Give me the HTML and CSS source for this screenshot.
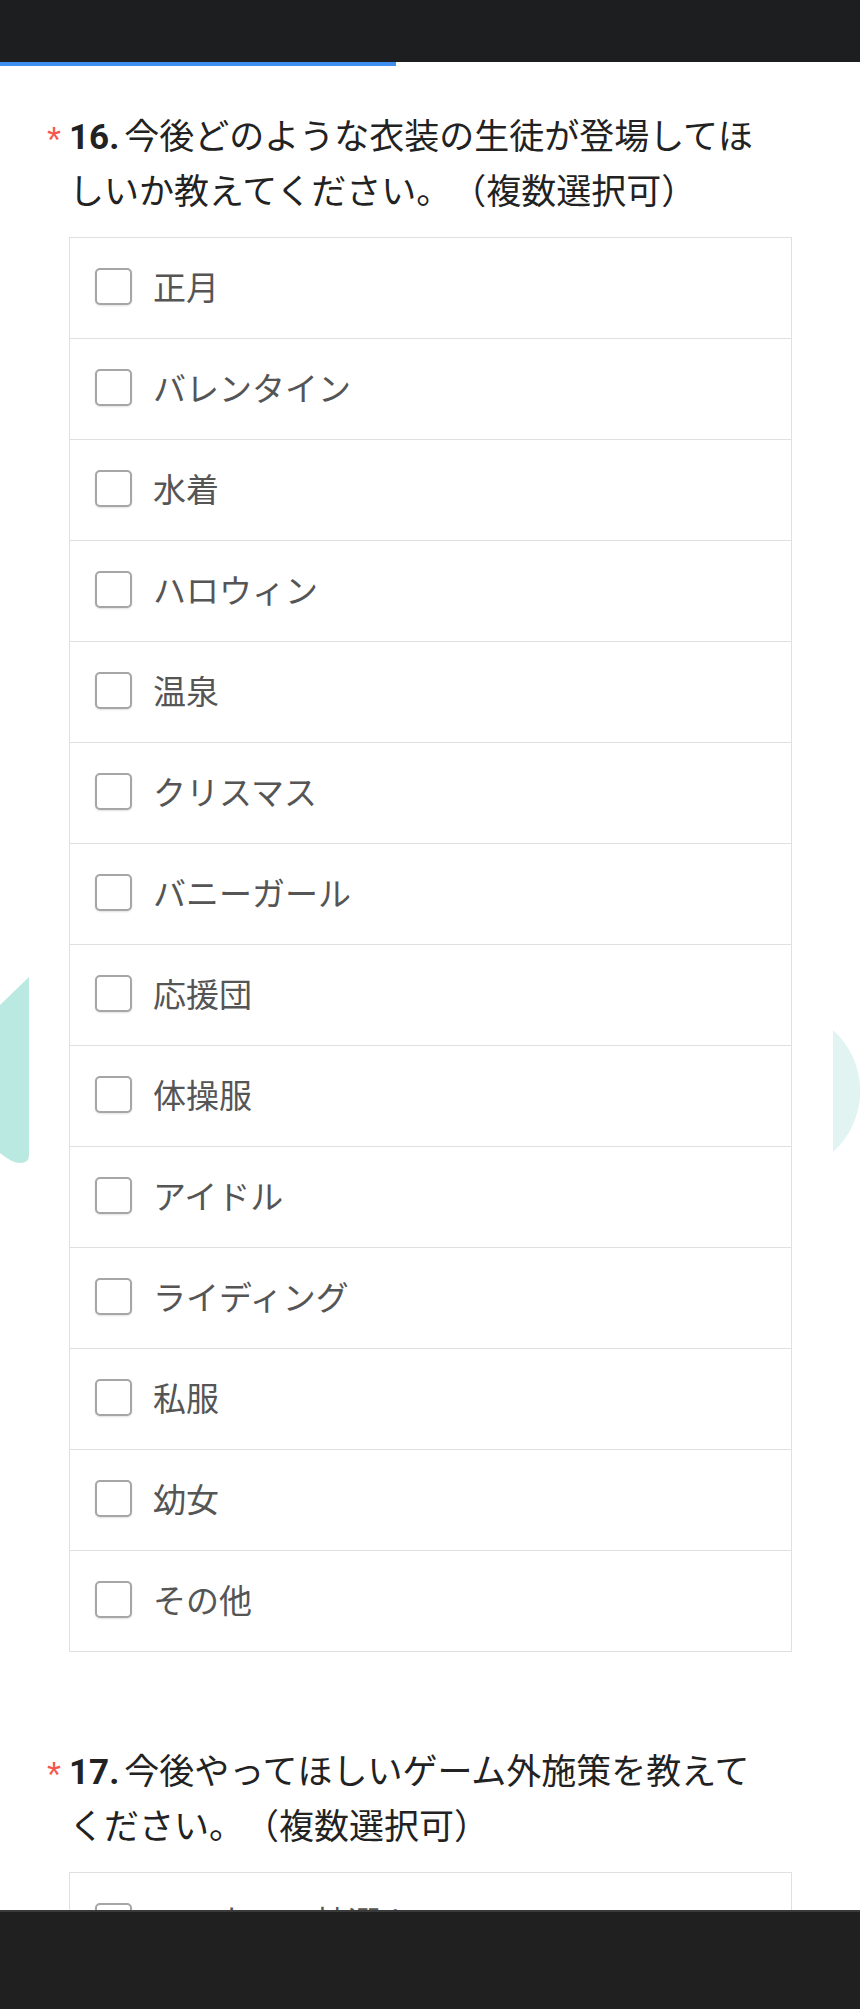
FILE: index.html
```html
<!DOCTYPE html>
<html lang="ja">
<head>
<meta charset="utf-8">
<title>アンケート</title>
<link rel="stylesheet" href="styles.css">
</head>
<body>
<div class="page">
  <header class="topbar"></header>
  <div class="progress"><div class="progress-fill" style="width:396px"></div></div>

  <svg class="deco deco-left" width="29" height="187" viewBox="0 0 29 187"><path d="M0 28 L29 0 L29 178 Q29 186 20 186 Q12 186 0 176 Z" fill="#b9e9e1"/></svg>
  <svg class="deco deco-right" width="27" height="122" viewBox="0 0 27 122"><path d="M0 0 A82 82 0 0 1 0 122 Z" fill="#e1f4f1"/></svg>

  <main class="form">
    <section class="question">
      <h2 class="q-title"><span class="req">*</span><span class="q-no">16.</span> 今後どのような衣装の生徒が登場してほしいか教えてください。（複数選択可）</h2>
      <ul class="options">
        <li class="option"><span class="check"></span><span class="label">正月</span></li>
        <li class="option"><span class="check"></span><span class="label">バレンタイン</span></li>
        <li class="option"><span class="check"></span><span class="label">水着</span></li>
        <li class="option"><span class="check"></span><span class="label">ハロウィン</span></li>
        <li class="option"><span class="check"></span><span class="label">温泉</span></li>
        <li class="option"><span class="check"></span><span class="label">クリスマス</span></li>
        <li class="option"><span class="check"></span><span class="label">バニーガール</span></li>
        <li class="option"><span class="check"></span><span class="label">応援団</span></li>
        <li class="option"><span class="check"></span><span class="label">体操服</span></li>
        <li class="option"><span class="check"></span><span class="label">アイドル</span></li>
        <li class="option"><span class="check"></span><span class="label">ライディング</span></li>
        <li class="option"><span class="check"></span><span class="label">私服</span></li>
        <li class="option"><span class="check"></span><span class="label">幼女</span></li>
        <li class="option"><span class="check"></span><span class="label">その他</span></li>
      </ul>
    </section>

    <section class="question">
      <h2 class="q-title"><span class="req">*</span><span class="q-no">17.</span> 今後やってほしいゲーム外施策を教えてください。（複数選択可）</h2>
      <ul class="options">
        <li class="option"><span class="check"></span><span class="label">SNS上での抽選キャンペーン</span></li>
        <li class="option"><span class="check"></span><span class="label">コラボカフェ</span></li>
        <li class="option"><span class="check"></span><span class="label">グッズ販売</span></li>
      </ul>
    </section>
  </main>

  <footer class="bottombar"></footer>
</div>
</body>
</html>
```

FILE: styles.css
```css
html, body {
  margin: 0;
  padding: 0;
  background: #ffffff;
}

body {
  font-family: "Noto Sans CJK JP", "Noto Sans", sans-serif;
  color: #222222;
  text-spacing-trim: space-all;
}

.page {
  position: relative;
  min-height: 2400px;
}

.topbar {
  height: 62px;
  background: #1d1e20;
}

.progress {
  height: 4px;
  background: #ffffff;
}

.progress-fill {
  height: 100%;
  background: #3f8ff0;
}

.deco {
  position: absolute;
  display: block;
}

.deco-left {
  left: 0;
  top: 977px;
}

.deco-right {
  right: 0;
  top: 1030px;
}

.form {
  padding: 0 68px 0 69px;
}

.question {
  padding: 42px 0 49px;
}

.q-title {
  margin: 0 0 23px;
  padding: 0 20px 0 0;
  font-size: 35px;
  font-weight: 400;
  line-height: 51px;
  color: #222222;
  position: relative;
  text-spacing-trim: space-all;
}

.req {
  position: absolute;
  left: -22px;
  top: 7px;
  line-height: 52px;
  color: #f5574c;
  font-size: 36px;
  font-family: "Liberation Sans", sans-serif;
}

.q-no {
  font-family: Roboto, "Noto Sans CJK JP", sans-serif;
  font-weight: 700;
  margin-right: -3px;
}

.options {
  list-style: none;
  margin: 0;
  padding: 0;
  border: 1px solid #e0e0e0;
}

.option {
  display: flex;
  align-items: center;
  box-sizing: border-box;
  height: 101px;
  padding: 0 0 4px 25px;
  border-bottom: 1px solid #e0e0e0;
}

.option:last-child {
  height: 100px;
  border-bottom: none;
}

.check {
  flex: none;
  box-sizing: border-box;
  width: 37px;
  height: 37px;
  border: 2px solid #a6a6a6;
  border-radius: 5px;
  background: #fff;
  box-shadow: 0 1px 2px rgba(0, 0, 0, 0.12);
}

.label {
  margin-left: 21px;
  font-size: 33px;
  color: #555555;
  line-height: 1;
}

.bottombar {
  position: fixed;
  left: 0;
  right: 0;
  bottom: 0;
  height: 97px;
  background: #202020;
  border-top: 2px solid #3a3a3a;
}
```
